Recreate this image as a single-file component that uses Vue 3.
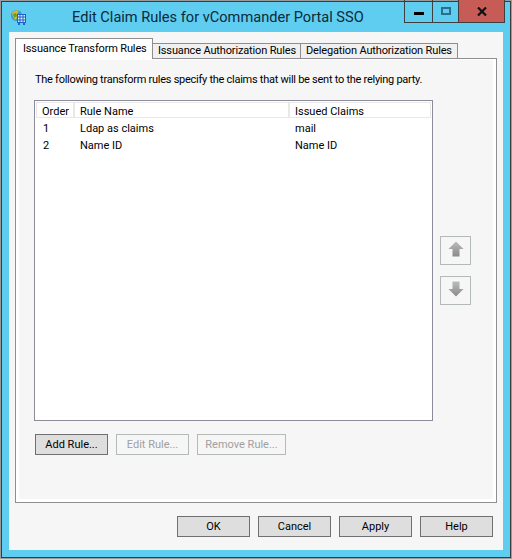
<script setup>
const rules = [
  { order: '1', name: 'Ldap as claims', claims: 'mail' },
  { order: '2', name: 'Name ID', claims: 'Name ID' },
]
const tabs = ['Issuance Authorization Rules', 'Delegation Authorization Rules']
</script>

<template>
  <div class="window">
    <header class="titlebar">
      <svg class="app-icon" width="17" height="17" viewBox="0 0 17 17">
        <circle cx="6.5" cy="6.5" r="5.5" fill="#2f9fd8" />
        <path d="M2 4 Q5 0 9 2 L7 5 L8 8 L5 11 L3 8 Z" fill="#e8b21e" />
        <path d="M3 5 L6 4 L7 7 L4 9 Z" fill="#4fa83a" />
        <rect x="7.5" y="5.5" width="8" height="8" fill="#d8ecfa" stroke="#1f63c4" />
        <path d="M10 5.5 V13.5 M13 5.5 V13.5 M7.5 8 H15.5 M7.5 11 H15.5" stroke="#1f63c4" />
        <rect x="8" y="14" width="2" height="2" fill="#1f63c4" />
        <rect x="13" y="14" width="2" height="2" fill="#1f63c4" />
      </svg>
      <span class="title">Edit Claim Rules for vCommander Portal SSO</span>
      <div class="caption">
        <div class="cap cap-min"><i class="min-glyph"></i></div>
        <div class="cap cap-max"><i class="max-glyph"></i></div>
        <div class="cap cap-close">
          <svg width="10" height="9" viewBox="0 0 10 9"><path d="M1 0.5 L9 8.5 M9 0.5 L1 8.5" stroke="#111" stroke-width="2.2" fill="none" /></svg>
        </div>
      </div>
    </header>

    <main class="client">
      <div class="tabstrip">
        <div class="tab active">Issuance Transform Rules</div>
        <div v-for="t in tabs" :key="t" class="tab">{{ t }}</div>
      </div>

      <section class="panel">
        <p class="intro">The following transform rules specify the claims that will be sent to the relying party.</p>
        <div class="list-row">
          <div class="list">
            <div class="list-head">
              <div class="h h-order">Order</div>
              <div class="h h-name">Rule Name</div>
              <div class="h h-claims">Issued Claims</div>
            </div>
            <div v-for="r in rules" :key="r.order" class="list-item">
              <div class="c-order">{{ r.order }}</div>
              <div class="c-name">{{ r.name }}</div>
              <div class="c-claims">{{ r.claims }}</div>
            </div>
          </div>
          <div class="arrows">
            <div class="arrow-btn">
              <svg class="arrow" width="16" height="16" viewBox="0 0 16 16">
                <defs>
                  <linearGradient id="ag" x1="0" y1="0" x2="0" y2="1">
                    <stop offset="0" stop-color="#bcbcbc" />
                    <stop offset="1" stop-color="#8a8a8a" />
                  </linearGradient>
                </defs>
                <path d="M8 0.5 L15.5 8 H11.5 V15.5 H4.5 V8 H0.5 Z" fill="url(#ag)" />
              </svg>
            </div>
            <div class="arrow-btn">
              <svg class="arrow" width="16" height="16" viewBox="0 0 16 16">
                <path d="M8 15.5 L15.5 8 H11.5 V0.5 H4.5 V8 H0.5 Z" fill="url(#ag)" />
              </svg>
            </div>
          </div>
        </div>
        <div class="rule-btns">
          <button class="btn w73">Add Rule...</button>
          <button class="btn w73 off">Edit Rule...</button>
          <button class="btn w89 off">Remove Rule...</button>
        </div>
      </section>

      <footer class="dialog-btns">
        <button class="btn w73">OK</button>
        <button class="btn w73">Cancel</button>
        <button class="btn w73">Apply</button>
        <button class="btn w73">Help</button>
      </footer>
    </main>
  </div>
</template>

<style>
html, body { margin: 0; padding: 0; background: #fff; }
</style>

<style scoped>
.window {
  position: relative;
  width: 512px;
  height: 559px;
  box-sizing: border-box;
  border: 1px solid #9a9a9a;
  outline: 1px solid #3c3c3c;
  outline-offset: -2px;
  background: #5ecdf0;
  padding: 1px 8px 8px 8px;
  display: flex;
  flex-direction: column;
  font-family: Roboto, "Liberation Sans", sans-serif;
  font-size: 11px;
  color: #000;
}
.titlebar {
  height: 30px;
  flex: none;
  display: flex;
  align-items: center;
  position: relative;
}
.app-icon { margin-left: 1px; margin-top: 1px; flex: none; }
.title {
  font-size: 14.6px;
  margin-left: 45px;
  margin-top: -1px;
  color: #0c2a3a;
  white-space: nowrap;
}
.caption {
  position: absolute;
  top: -2px;
  right: -2px;
  width: 101px;
  height: 23px;
  box-sizing: border-box;
  display: flex;
  border: 1px solid #3f3f3f;
  border-top: none;
}
.cap { display: flex; align-items: center; justify-content: center; box-sizing: border-box; }
.cap-min { width: 28px; border-right: 1px solid #3f3f3f; }
.cap-max { width: 26px; border-right: 1px solid #3f3f3f; }
.cap-close { flex: 1; background: #c75b55; }
.min-glyph { display: block; width: 10px; height: 3px; background: #000; margin-top: 5px; }
.max-glyph { display: block; width: 10px; height: 8px; box-sizing: border-box; border: 2px solid #2b6f8e; margin-top: -1px; }

.client {
  flex: 1;
  min-height: 0;
  background: #f6f6f6;
  padding: 6px 6px 13px;
  display: flex;
  flex-direction: column;
}
.tabstrip { display: flex; align-items: flex-start; height: 20px; position: relative; z-index: 1; flex: none; }
.tab {
  box-sizing: border-box;
  height: 15px;
  margin-top: 5px;
  border: 1px solid #8e8e8e;
  border-bottom: none;
  border-left: none;
  background: #f0f0f0;
  padding: 0 5px 2px;
  display: flex;
  align-items: center;
  white-space: nowrap;
  width: 148px;
  letter-spacing: -0.15px;
}
.tab + .tab + .tab { width: 157px; }
.tab.active {
  width: 138px;
  height: 21px;
  margin-top: 0;
  border-left: 1px solid #8e8e8e;
  background: #fff;
  padding: 0 7px 1px;
}
.panel {
  box-sizing: border-box;
  height: 445px;
  flex: none;
  border: 1px solid #8e8e93;
  box-shadow: inset 3px 0 #fff, inset -3px 0 #fff, inset 0 -3px #fff, inset 0 1px #fff;
  padding: 0 25px 0 18px;
  display: flex;
  flex-direction: column;
}
.intro { margin: 14px 0 0 1px; height: 13px; line-height: 13px; white-space: nowrap; letter-spacing: -0.265px; }
.list-row { display: flex; margin-top: 14px; gap: 7px; }
.list {
  box-sizing: border-box;
  width: 399px;
  height: 321px;
  border: 1px solid #8b8b9a;
  background: #fff;
  padding-top: 1px;
}
.list-head { display: flex; height: 16px; margin: 0 1px 1px; }
.h {
  box-sizing: border-box;
  border: 1px solid #e8e8e8;
  padding-left: 5px;
  line-height: 18px;
  white-space: nowrap;
}
.h-order { width: 38px; }
.h-name { width: 215px; }
.h-claims { flex: 1; }
.list-item { display: flex; height: 17px; line-height: 19px; white-space: nowrap; }
.c-order { width: 45px; padding-left: 8px; box-sizing: border-box; }
.c-name { width: 215px; }
.arrows { display: flex; flex-direction: column; gap: 11px; margin-top: 136px; }
.arrow-btn {
  box-sizing: border-box;
  width: 31px;
  height: 29px;
  border: 1px solid #b4bab8;
  display: flex;
  align-items: center;
  justify-content: center;
}
.arrow { margin-bottom: 3px; }
.rule-btns { display: flex; gap: 8px; margin: 13px 0 0 1px; }
.dialog-btns { display: flex; gap: 8px; justify-content: flex-end; margin: 13px 4px 0 0; }
.btn {
  box-sizing: border-box;
  height: 21px;
  padding: 0;
  border: 1px solid #707070;
  background: #dedede;
  font: inherit;
  color: #000;
  border-radius: 0;
}
.w73 { width: 73px; }
.w89 { width: 89px; }
.btn.off { border-color: #b3bab8; background: #f6f6f6; color: #a0a0a0; }
</style>
